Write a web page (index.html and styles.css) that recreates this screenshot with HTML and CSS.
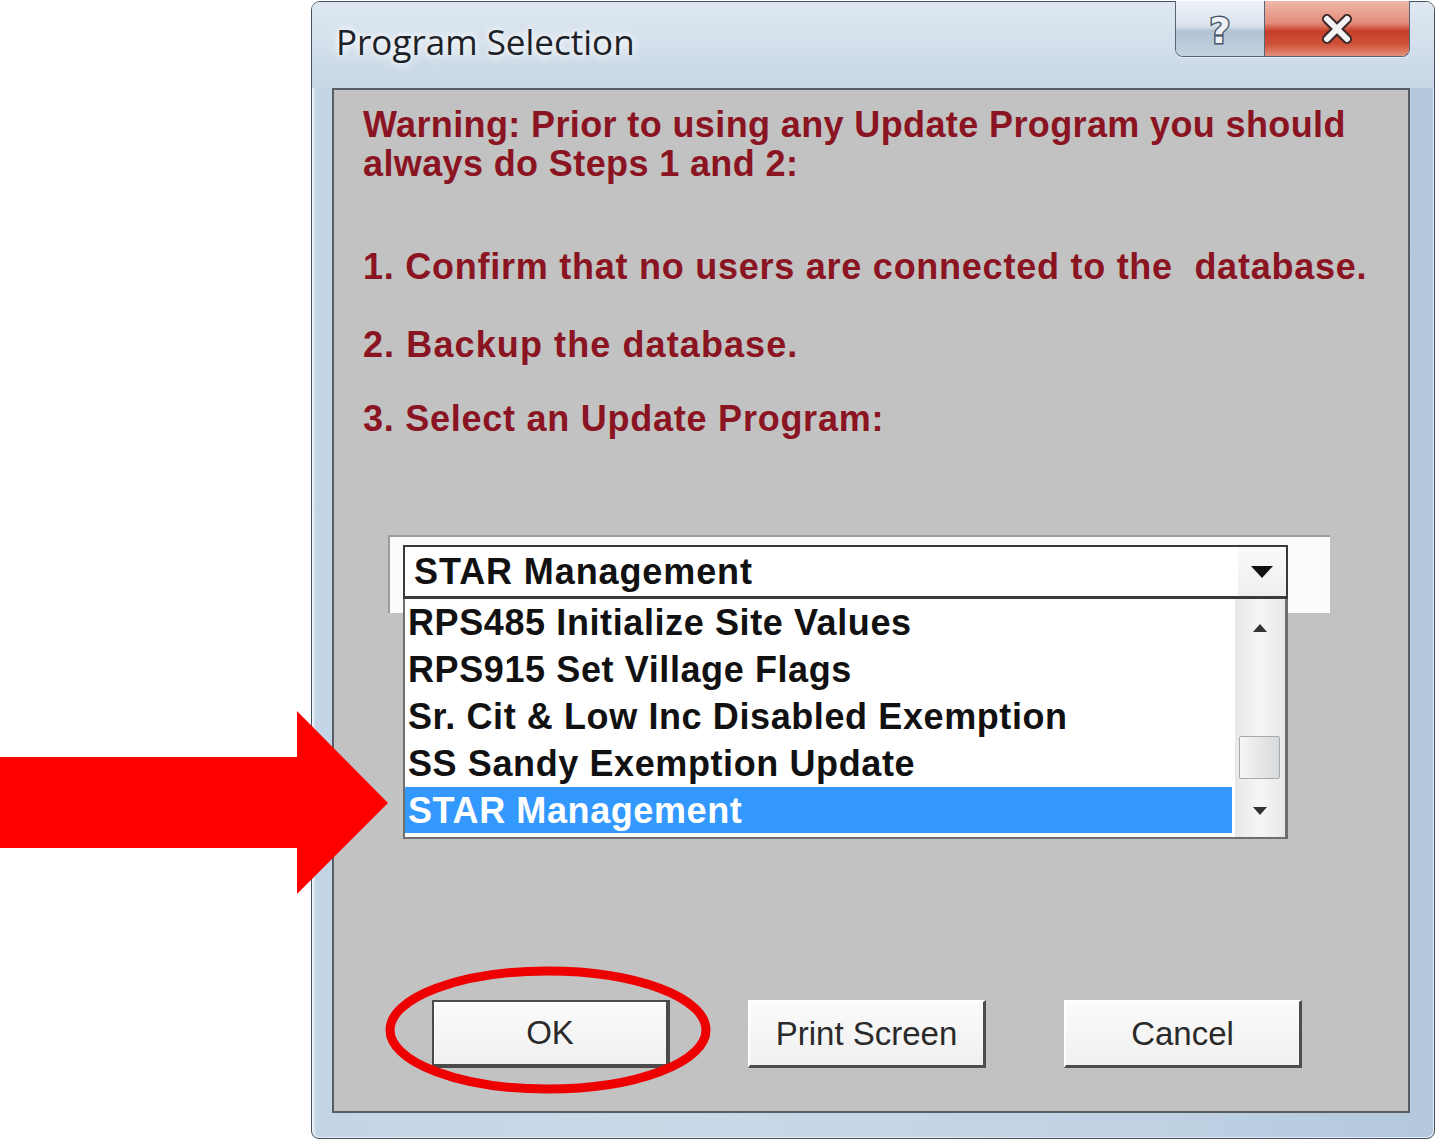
FILE: index.html
```html
<!DOCTYPE html>
<html lang="en">
<head>
<meta charset="utf-8">
<title>Program Selection</title>
<link rel="stylesheet" href="styles.css">
</head>
<body>
<div class="stage">
  <div class="window">
    <div class="titlebar">
      <div class="title">Program Selection</div>
      <div class="caption-btns">
        <div class="cbtn help">
          <svg width="34" height="44" viewBox="0 0 34 44">
            <text x="17" y="36" text-anchor="middle" class="qmark">?</text>
          </svg>
        </div>
        <div class="cbtn close">
          <svg width="40" height="32" viewBox="0 0 40 32">
            <path d="M10 6 L30 26 M30 6 L10 26" stroke="#3b2a2a" stroke-width="10" stroke-linecap="round"/>
            <path d="M10 6 L30 26 M30 6 L10 26" stroke="#f4f4f4" stroke-width="6" stroke-linecap="round"/>
          </svg>
        </div>
      </div>
    </div>
    <div class="client">
      <p class="warn">Warning: Prior to using any Update Program you should<br>always do Steps 1 and 2:</p>
      <p class="step s1">1. Confirm that no users are connected to the&nbsp; database.</p>
      <p class="step s2">2. Backup the database.</p>
      <p class="step s3">3. Select an Update Program:</p>
      <div class="combo-wrap">
        <div class="combo">
          <span class="combo-text">STAR Management</span>
          <span class="combo-btn">
            <svg width="24" height="14" viewBox="0 0 24 14"><path d="M1 1 H23 L12 13 Z" fill="#111"/></svg>
          </span>
          <div class="dropdown">
            <ul class="items">
              <li class="item">RPS485 Initialize Site Values</li>
              <li class="item">RPS915 Set Village Flags</li>
              <li class="item">Sr. Cit &amp; Low Inc Disabled Exemption</li>
              <li class="item">SS Sandy Exemption Update</li>
              <li class="item selected">STAR Management</li>
            </ul>
            <div class="scrollbar">
              <div class="sb-up"><svg width="16" height="10" viewBox="0 0 16 10"><path d="M1 9 L8 1 L15 9 Z" fill="#333"/></svg></div>
              <div class="sb-track"><div class="sb-thumb"></div></div>
              <div class="sb-down"><svg width="16" height="10" viewBox="0 0 16 10"><path d="M1 1 L15 1 L8 9 Z" fill="#333"/></svg></div>
            </div>
          </div>
        </div>
      </div>
      <div class="buttons">
        <div class="btn default">OK</div>
        <div class="btn">Print Screen</div>
        <div class="btn">Cancel</div>
      </div>
    </div>
  </div>
  <svg class="arrow" width="392" height="186" viewBox="0 0 392 186">
    <polygon points="0,47 297,47 297,1 388,93 297,184 297,138 0,138" fill="#ff0000"/>
  </svg>
  <svg class="ring" width="330" height="132" viewBox="0 0 330 132">
    <ellipse cx="164" cy="65" rx="158" ry="59" fill="none" stroke="#ee0000" stroke-width="9"/>
  </svg>
</div>
</body>
</html>
```
FILE: styles.css
```css
* { box-sizing: border-box; }
html, body { margin: 0; padding: 0; background: #ffffff; }
body { font-family: "Liberation Sans", Arial, sans-serif; }

.stage {
  position: relative;
  width: 1435px;
  height: 1140px;
  padding: 1px 0 0 311px;
  overflow: hidden;
}

.window {
  width: 1124px;
  height: 1138px;
  border: 1px solid #44515f;
  border-radius: 9px 9px 8px 8px;
  background: linear-gradient(90deg, #c3d4e6 0, #cad9e8 30%, #bfd1e3 75%, #b4c8dc 100%);
  padding: 0 24px 25px 20px;
  display: flex;
  flex-direction: column;
  box-shadow: inset 1px 1px 0 #f2f6fb, inset -1px -1px 0 #e3ebf3, inset 3px 0 0 #dbe6f1;
}

.titlebar {
  flex: none;
  height: 86px;
  display: flex;
  justify-content: space-between;
  align-items: flex-start;
  margin: 0 -24px 0 -20px;
  padding: 0 24px 0 20px;
  background: linear-gradient(180deg, #dfe8f1 0, #d3dfeb 50%, #c8d7e6 100%);
  border-radius: 8px 8px 0 0;
}

.title {
  padding: 17px 0 0 4px;
  font-family: "Open Sans", "Noto Sans", sans-serif;
  font-size: 35px;
  line-height: 46px;
  color: #1d2228;
  text-shadow: 0 0 6px #ffffff, 0 0 12px rgba(255,255,255,.9);
}

.caption-btns {
  display: flex;
  width: 235px;
  height: 56px;
  margin-top: -1px;
  border: 1px solid #56657a;
  border-top: none;
  border-radius: 0 0 8px 8px;
  overflow: hidden;
  box-shadow: 0 1px 0 #e6eef6;
}

.cbtn {
  display: flex;
  align-items: center;
  justify-content: center;
}

.cbtn.help {
  width: 89px;
  border-right: 1px solid #56657a;
  background: linear-gradient(180deg, #eef3f8 0, #d9e3ec 45%, #b3c3d4 55%, #c3d1df 100%);
}

.qmark {
  font-family: "DejaVu Sans", sans-serif;
  font-weight: bold;
  font-size: 36px;
  fill: #eef2f6;
  stroke: #4a5666;
  stroke-width: 3px;
  paint-order: stroke fill;
}

.cbtn.close {
  flex: 1;
  background: linear-gradient(180deg, #f0b8aa 0, #e28c78 40%, #c63e28 55%, #cf5038 78%, #e3907a 100%);
}

.client {
  flex: 1;
  display: flex;
  flex-direction: column;
  background: #c2c2c2;
  border: 2px solid #575d65;
  padding: 0 0 43px 29px;
  color: #8a1421;
}

.warn, .step {
  margin: 0;
  font-family: "Liberation Sans", Arial, sans-serif;
  font-weight: bold;
  font-size: 36px;
  white-space: nowrap;
}

.warn { margin-top: 15px; line-height: 39px; letter-spacing: 0.38px; }
.step { line-height: 40px; letter-spacing: 0.75px; }
.s1 { margin-top: 64px; }
.s2 { margin-top: 38px; letter-spacing: 1.1px; }
.s3 { margin-top: 34px; }

.combo-wrap {
  flex: none;
  position: relative;
  width: 942px;
  height: 78px;
  margin: 96px 0 0 25px;
  padding: 8px 0 0 13px;
  background: #fbfbfb;
  border-top: 2px solid #9d9d9d;
  border-left: 2px solid #9d9d9d;
}

.combo {
  position: relative;
  width: 885px;
  height: 54px;
  display: flex;
  align-items: center;
  background: #ffffff;
  border: 2px solid #3a3a3a;
  border-bottom-width: 3px;
  color: #111111;
}

.combo-text {
  flex: 1;
  padding-left: 9px;
  font-weight: bold;
  font-size: 36px;
  letter-spacing: 0.9px;
  line-height: 48px;
}

.combo-btn {
  width: 48px;
  height: 100%;
  display: flex;
  align-items: center;
  justify-content: center;
  background: linear-gradient(180deg, #fafafa, #eeeeee);
}

.dropdown {
  position: absolute;
  top: 100%;
  left: -2px;
  right: -2px;
  margin-top: 3px;
  height: 240px;
  display: flex;
  background: #ffffff;
  border: 2px solid #6e6e6e;
  border-top: none;
  border-right-width: 3px;
}

.items {
  flex: 1;
  margin: 0;
  padding: 0;
  list-style: none;
}

.item {
  height: 47px;
  line-height: 47px;
  padding-left: 3px;
  margin-right: 3px;
  font-weight: bold;
  font-size: 36px;
  letter-spacing: 0.6px;
  color: #111111;
  white-space: nowrap;
}

.item.selected {
  background: #3399ff;
  color: #ffffff;
  height: 46px;
}

.scrollbar {
  width: 50px;
  display: flex;
  flex-direction: column;
  background: linear-gradient(90deg, #e8e8e8, #f6f6f6 50%, #e8e8e8);
}

.sb-up, .sb-down {
  display: flex;
  align-items: center;
  justify-content: center;
}
.sb-up { height: 58px; }
.sb-down { height: 52px; }

.sb-track { flex: 1; }

.sb-thumb {
  margin: 79px 5px 0 4px;
  height: 43px;
  border: 1px solid #a9a9a9;
  border-radius: 2px;
  background: linear-gradient(90deg, #f7f7f7, #e4e4e4 60%, #d6dbe0);
}

.buttons {
  margin-top: auto;
  display: flex;
  gap: 78px;
  padding-left: 69px;
}

.btn {
  width: 238px;
  height: 68px;
  display: flex;
  align-items: center;
  justify-content: center;
  background: linear-gradient(180deg, #fbfbfb, #f0f0f0);
  border-top: 2px solid #ffffff;
  border-left: 2px solid #ffffff;
  border-right: 3px solid #4d4d4d;
  border-bottom: 3px solid #4d4d4d;
  font-family: "Liberation Sans", Arial, sans-serif;
  font-size: 33px;
  color: #2a2a2a;
}

.btn.default {
  border: 2px solid #4a4a4a;
  border-right-width: 4px;
  border-bottom-width: 4px;
  box-shadow: inset 1px 1px 0 #ffffff;
}

.arrow {
  position: absolute;
  left: 0;
  top: 710px;
}

.ring {
  position: absolute;
  left: 384px;
  top: 965px;
}
```
